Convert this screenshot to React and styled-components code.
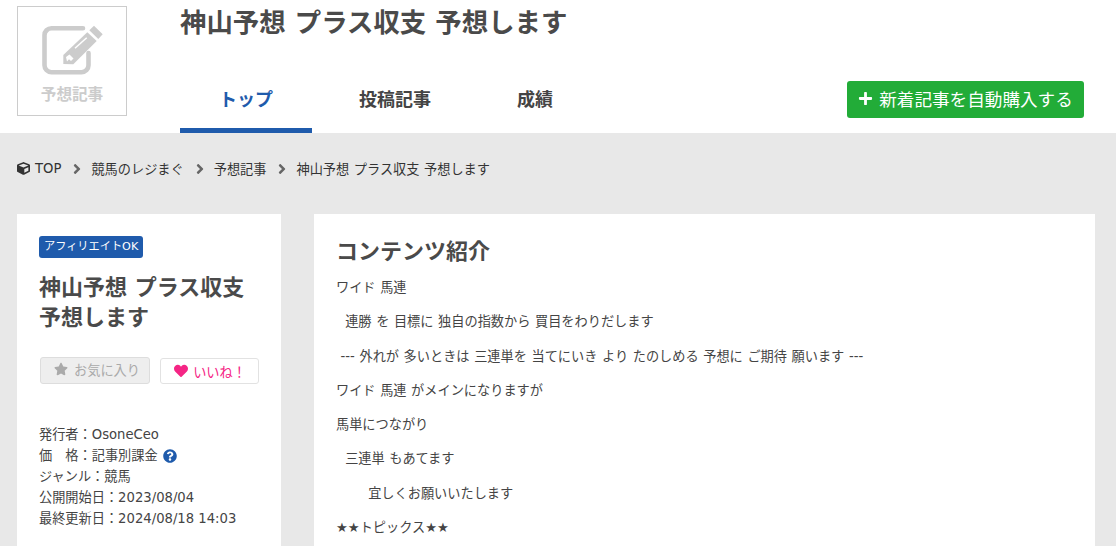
import styled, { createGlobalStyle } from 'styled-components'
import { FaPlus, FaCube, FaAngleRight, FaStar, FaHeart, FaQuestionCircle } from 'react-icons/fa'

const GlobalStyle = createGlobalStyle`
  html, body {
    margin: 0;
    height: 546px;
    overflow: hidden;
    background: #e8e8e8;
    color: #444;
    font-family: "DejaVu Sans", "Noto Sans CJK JP", sans-serif;
  }
  * { box-sizing: border-box; }
`

const Header = styled.header`
  height: 133px;
  background: #fff;
  display: flex;
  padding-left: 17px;
`

const LogoBox = styled.div`
  width: 110px;
  height: 110px;
  margin-top: 6px;
  border: 1px solid #ccc;
  color: #ccc;
  display: flex;
  flex-direction: column;
  align-items: center;
  padding-top: 18px;
`

const LogoIcon = styled.svg`
  width: 61px;
  height: 50px;
  margin-left: 1px;
  flex: none;
`

const LogoText = styled.span`
  font-size: 15.6px;
  font-weight: 700;
  line-height: 20px;
  margin-top: 10px;
`

const HeaderMain = styled.div`
  flex: 1;
  margin-left: 53px;
  padding-right: 32px;
  display: flex;
  flex-direction: column;
`

const SiteTitle = styled.h1`
  margin: 0;
  height: 66px;
  padding-top: 5px;
  font-size: 26.4px;
  line-height: 36px;
  font-weight: 700;
  color: #4a4a4a;
`

const HeaderRow = styled.div`
  flex: 1;
  display: flex;
  justify-content: space-between;
`

const Tabs = styled.nav`
  display: flex;
  gap: 8px;
`

const Tab = styled.a`
  padding: 2px 39px 0;
  height: 67px;
  display: flex;
  align-items: center;
  font-size: 18px;
  font-weight: 700;
  color: ${p => (p.$active ? '#1f5bac' : '#444')};
  border-bottom: 5px solid ${p => (p.$active ? '#1f5bac' : 'transparent')};
`

const AutoBuy = styled.a`
  height: 37px;
  margin-top: 15px;
  width: 237px;
  padding-bottom: 2px;
  display: flex;
  align-items: center;
  justify-content: center;
  gap: 6px;
  background: #22ac38;
  border-radius: 3px;
  color: #fff;
  font-size: 17.6px;
  svg { font-size: 15px; }
`

const Breadcrumb = styled.ol`
  list-style: none;
  margin: 0 0 10px;
  padding: 0 0 0 17px;
  height: 71px;
  display: flex;
  align-items: center;
  font-size: 13.2px;
  word-spacing: 0.4px;
  color: #333;
`

const Crumb = styled.li`
  display: flex;
  align-items: center;
  gap: 5px;
  svg { font-size: 13px; }
`

const CrumbSep = styled(FaAngleRight)`
  font-size: 16px;
  color: #666;
  margin: 0 6px 0 8px;
`

const Columns = styled.div`
  display: flex;
  gap: 33px;
  padding: 0 21px 0 17px;
  align-items: flex-start;
`

const Sidebar = styled.aside`
  width: 264px;
  height: 340px;
  background: #fff;
  padding: 22px 22px 0;
`

const Badge = styled.span`
  display: block;
  width: fit-content;
  background: #1f5bac;
  color: #fff;
  font-size: 11.2px;
  line-height: 22px;
  padding: 0 5px;
  border-radius: 3px;
`

const SideTitle = styled.h2`
  margin: 15px 0 0;
  font-size: 22px;
  font-weight: 700;
  line-height: 30px;
  color: #4a4a4a;
`

const ButtonRow = styled.div`
  display: flex;
  align-items: flex-end;
  gap: 10px;
  margin: 24px 0 40px 1px;
`

const ActionButton = styled.button`
  display: flex;
  align-items: center;
  justify-content: center;
  gap: ${p => (p.$like ? '5px' : '6px')};
  height: ${p => (p.$like ? '26px' : '27px')};
  width: ${p => (p.$like ? '99px' : '110px')};
  padding: ${p => (p.$like ? '0 0 0 1px' : '0 0 3px 4px')};
  border: 1px solid ${p => (p.$like ? '#e2e2e2' : '#ddd')};
  border-radius: 3px;
  background: ${p => (p.$like ? '#fff' : '#eee')};
  color: ${p => (p.$like ? '#f52585' : '#aaa')};
  font-family: inherit;
  font-size: 13.2px;
  svg { font-size: 14px; }
`

const MetaList = styled.dl`
  margin: 0;
  font-size: 13.2px;
  line-height: 21px;
  color: #444;
`

const MetaRow = styled.div`
  display: flex;
  align-items: center;
  white-space: nowrap;
  svg { font-size: 14px; color: #1f5bac; margin-left: 5px; }
`

const Content = styled.main`
  width: 781px;
  height: 340px;
  background: #fff;
  padding: 22px 22px 0;
  overflow: hidden;
`

const ContentTitle = styled.h2`
  margin: 0 0 10px;
  font-size: 22px;
  font-weight: 700;
  line-height: 32px;
  color: #4a4a4a;
`

const Paragraph = styled.p`
  margin: 0 0 14.3px;
  font-size: 13.2px;
  word-spacing: 0.4px;
  line-height: 20px;
  color: #444;
  white-space: pre;
`

const lines = [
  'ワイド 馬連',
  '  連勝 を 目標に 独自の指数から 買目をわりだします',
  ' --- 外れが 多いときは 三連単を 当てにいき より たのしめる 予想に ご期待 願います ---',
  'ワイド 馬連 がメインになりますが',
  '馬単につながり',
  '  三連単 もあてます',
  '       宜しくお願いいたします',
  '★★トピックス★★',
]

const App = () => (
  <>
    <GlobalStyle />
    <Header>
      <LogoBox>
        <LogoIcon viewBox="0 0 61 50">
          <path d="M41 3.2H9.5a7 7 0 0 0-7 7v30a7 7 0 0 0 7 7h30a7 7 0 0 0 7-7V28" fill="none" stroke="currentColor" strokeWidth="4.6" strokeLinecap="round" />
          <path d="M45.3 7.3L54.7 16L31.3 39.3L21.3 38.9V30Z" fill="currentColor" />
          <path d="M47.3 5.3L52 .7L60.7 9.3L56.3 14Z" fill="currentColor" />
          <path d="M33 23.3L44.7 12.7" stroke="#fff" strokeWidth="1.5" />
          <path d="M24 32L27.5 29.5L31.5 33.5L29 36L27 34.3L25 36.5Z" fill="#fff" />
        </LogoIcon>
        <LogoText>予想記事</LogoText>
      </LogoBox>
      <HeaderMain>
        <SiteTitle>神山予想 プラス収支 予想します</SiteTitle>
        <HeaderRow>
          <Tabs>
            <Tab $active>トップ</Tab>
            <Tab>投稿記事</Tab>
            <Tab>成績</Tab>
          </Tabs>
          <AutoBuy><FaPlus />新着記事を自動購入する</AutoBuy>
        </HeaderRow>
      </HeaderMain>
    </Header>
    <Breadcrumb>
      <Crumb><FaCube />TOP</Crumb>
      <CrumbSep />
      <Crumb>競馬のレジまぐ</Crumb>
      <CrumbSep />
      <Crumb>予想記事</Crumb>
      <CrumbSep />
      <Crumb>神山予想 プラス収支 予想します</Crumb>
    </Breadcrumb>
    <Columns>
      <Sidebar>
        <Badge>アフィリエイトOK</Badge>
        <SideTitle>神山予想 プラス収支<br />予想します</SideTitle>
        <ButtonRow>
          <ActionButton><FaStar />お気に入り</ActionButton>
          <ActionButton $like><FaHeart />いいね！</ActionButton>
        </ButtonRow>
        <MetaList>
          <MetaRow>発行者：OsoneCeo</MetaRow>
          <MetaRow>価　格：記事別課金<FaQuestionCircle /></MetaRow>
          <MetaRow>ジャンル：競馬</MetaRow>
          <MetaRow>公開開始日：2023/08/04</MetaRow>
          <MetaRow>最終更新日：2024/08/18 14:03</MetaRow>
        </MetaList>
      </Sidebar>
      <Content>
        <ContentTitle>コンテンツ紹介</ContentTitle>
        {lines.map((line, i) => <Paragraph key={i}>{line}</Paragraph>)}
      </Content>
    </Columns>
  </>
)

export default App
